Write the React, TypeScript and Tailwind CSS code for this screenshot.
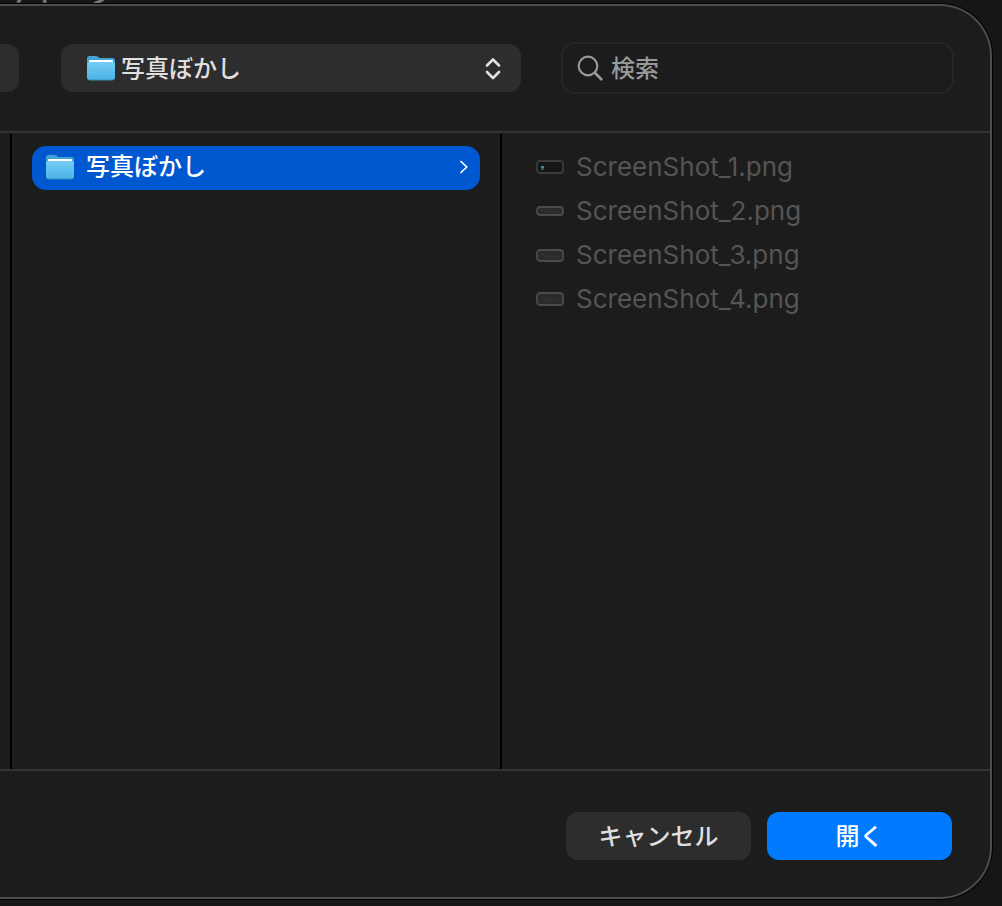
const files = [
  { name: "ScreenShot_1.png", height: 14, fill: "#151618", stroke: "#3c3c3c", badge: true },
  { name: "ScreenShot_2.png", height: 10, fill: "#2b2b2a", stroke: "#4b4b4a", badge: false },
  { name: "ScreenShot_3.png", height: 13, fill: "#2b2b2a", stroke: "#4b4b4a", badge: false },
  { name: "ScreenShot_4.png", height: 14, fill: "#2b2b2a", stroke: "#4b4b4a", badge: false },
];

const FolderIcon = ({ className = "" }: { className?: string }) => (
  <svg viewBox="0 0 30 26" className={`h-[26px] w-[30px] shrink-0 ${className}`} aria-hidden="true">
    <defs>
      <linearGradient id="folder-front" x1="0" y1="0" x2="0" y2="1">
        <stop offset="0" stopColor="#74cdf6" />
        <stop offset="1" stopColor="#4bb2e3" />
      </linearGradient>
    </defs>
    <path
      d="M1 3.5Q1 1 3.5 1H9.5Q11 1 12 1.8L12.8 2.4Q13.5 3 15 3H26.5Q29 3 29 5.5V22Q29 25 26 25H4Q1 25 1 22Z"
      fill="#3da4d5"
    />
    <rect x="3" y="5" width="24" height="5" rx="1" fill="#fff" />
    <path d="M1 9Q1 7 3 7H27Q29 7 29 9V22Q29 25 26 25H4Q1 25 1 22Z" fill="url(#folder-front)" />
    <path d="M1.5 23.5Q2.3 25 4 25H26Q27.7 25 28.5 23.5" fill="none" stroke="#3b91ba" strokeWidth="1" />
  </svg>
);

const Thumbnail = ({ file }: { file: (typeof files)[number] }) => (
  <svg width="28" height={file.height} viewBox={`0 0 28 ${file.height}`} className="shrink-0" aria-hidden="true">
    <rect
      x="1"
      y="1"
      width="26"
      height={file.height - 2}
      rx="3"
      fill={file.fill}
      stroke={file.stroke}
      strokeWidth="1.8"
    />
    {file.badge ? (
      <>
        <rect x="5" y="6" width="3" height="4" fill="#28556f" />
        <rect x="5" y="6" width="3" height="2" fill="#4886a5" />
      </>
    ) : (
      <path d={`M5 ${file.height / 2 - 1}H13M9 ${file.height / 2 + 1}H23`} stroke="#353534" strokeWidth="1" />
    )}
  </svg>
);

const App = () => {
  return (
    <div className="relative flex h-screen flex-col overflow-hidden bg-[#171616] pt-1 pr-[10px] pb-[7px] font-['Inter','Noto_Sans_CJK_JP',sans-serif] text-2xl text-[#dfdfdf]">
      {/* Page heading, mostly scrolled out above the dialog */}
      <div className="absolute -top-7 left-[14px] text-4xl leading-9 text-[#777]">パーク</div>

      <div
        role="dialog"
        aria-label="写真ぼかし"
        className="relative flex flex-1 flex-col overflow-hidden rounded-r-[52px] border-y-2 border-r-2 border-[#4c4c4c] bg-[#1c1c1c] shadow-[0_0_0_1px_#000]"
      >
        {/* Toolbar */}
        <header className="flex h-[127px] shrink-0 items-start border-b-2 border-[#333] pr-9">
          <button type="button" aria-label="表示" className="mt-[38px] h-12 w-[19px] shrink-0 rounded-r-xl bg-[#2d2d2d]" />
          <div className="relative mt-[38px] ml-[42px] flex-1">
            <FolderIcon className="pointer-events-none absolute top-[11px] left-[25px]" />
            <select
              aria-label="フォルダ"
              className="h-12 w-full appearance-none rounded-xl bg-[#2d2d2d] pt-[2px] pr-12 pl-[60px] font-medium"
            >
              <option>写真ぼかし</option>
            </select>
            <svg
              viewBox="0 0 16 22"
              className="pointer-events-none absolute top-[14px] right-5 h-[22px] w-4"
              fill="none"
              stroke="#e0e0e0"
              strokeWidth="2.6"
              strokeLinecap="round"
              strokeLinejoin="round"
              aria-hidden="true"
            >
              <path d="M2 7.5L8 1.5L14 7.5M2 14L8 20L14 14" />
            </svg>
          </div>
          <label className="mt-9 ml-10 flex h-[52px] w-[393px] items-center gap-2 rounded-[14px] border-2 border-[#262626] pl-[14px] text-[#989898]">
            <svg
              viewBox="0 0 26 26"
              className="h-[26px] w-[26px] shrink-0"
              fill="none"
              stroke="currentColor"
              strokeLinecap="round"
              aria-hidden="true"
            >
              <circle cx="11" cy="11" r="9.3" strokeWidth="2.2" />
              <path d="M18 18L24.3 24.3" strokeWidth="2.8" />
            </svg>
            <input
              type="text"
              aria-label="検索"
              placeholder="検索"
              className="w-full min-w-0 bg-transparent pt-[2px] font-medium outline-none placeholder:text-[#989898]"
            />
          </label>
        </header>

        {/* Columns */}
        <main className="grid flex-1 grid-cols-[10px_2px_1fr_2px_1fr] pt-px">
          <div />
          <div className="bg-black" />
          <div className="min-w-0 px-5 pt-3">
            <button
              type="button"
              className="flex h-11 w-full items-center rounded-[14px] bg-[#0058d0] pr-3 pb-[2px] pl-[13px] font-medium text-white"
            >
              <FolderIcon />
              <span className="ml-[11px] flex-1 text-left">写真ぼかし</span>
              <svg
                viewBox="0 0 8 14"
                className="h-[14px] w-2"
                fill="none"
                stroke="#fff"
                strokeWidth="1.7"
                strokeLinecap="round"
                strokeLinejoin="round"
                aria-hidden="true"
              >
                <path d="M1 1.5L6.8 7L1 12.5" />
              </svg>
            </button>
          </div>
          <div className="bg-black" />
          <ul className="min-w-0 pt-3 pr-5 pl-[34px]">
            {files.map((file) => (
              <li key={file.name} className="flex h-11 items-center gap-3 pb-[2px] text-[26px] text-[#555]">
                <Thumbnail file={file} />
                <span>{file.name}</span>
              </li>
            ))}
          </ul>
        </main>

        {/* Actions */}
        <footer className="flex h-32 shrink-0 justify-end gap-4 border-t-2 border-[#333] pt-[41px] pr-[38px]">
          <button type="button" className="h-12 w-[185px] rounded-xl bg-[#2d2d2d] pt-[2px] font-medium">
            キャンセル
          </button>
          <button type="button" className="h-12 w-[185px] rounded-xl bg-[#007aff] pt-[2px] font-medium text-white">
            開く
          </button>
        </footer>
      </div>
    </div>
  );
};

export default App;
